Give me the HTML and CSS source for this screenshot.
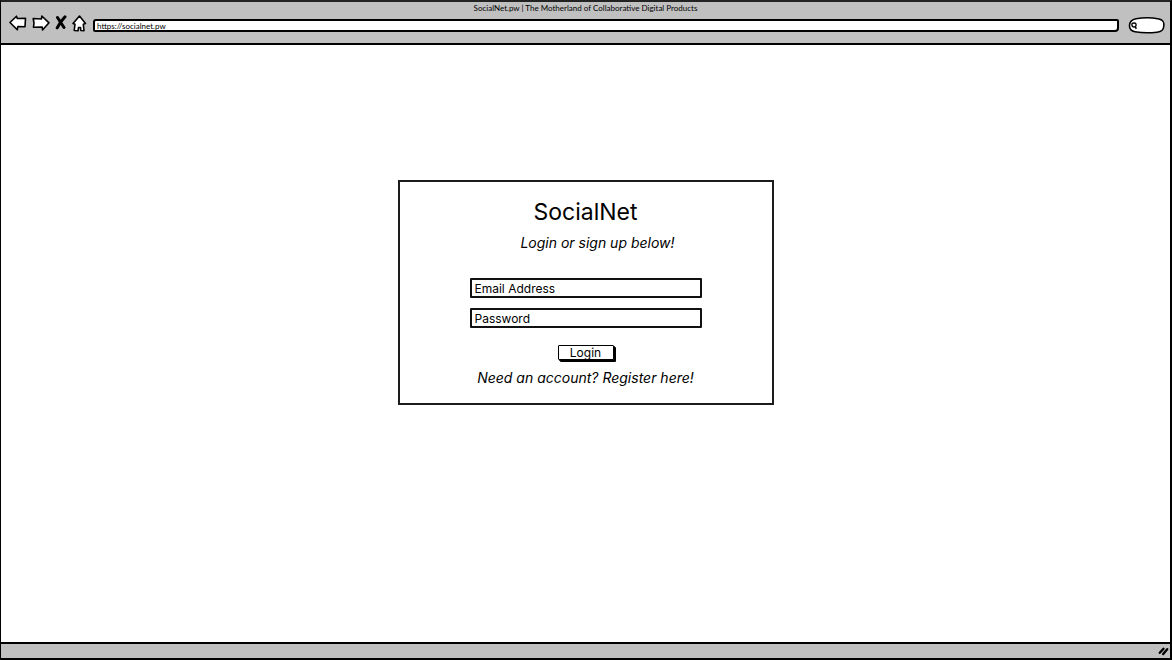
FILE: index.html
```html
<!DOCTYPE html>
<html lang="en">
<head>
<meta charset="utf-8">
<title>SocialNet.pw | The Motherland of Collaborative Digital Products</title>
<link rel="stylesheet" href="styles.css">
</head>
<body>
<div class="window">
  <header class="chrome">
    <div class="window-title">SocialNet.pw | The Motherland of Collaborative Digital Products</div>
    <div class="toolbar">
      <nav class="nav-buttons" aria-label="Browser navigation">
        <button class="nav-button" type="button" aria-label="Back"><svg width="18" height="18" viewBox="0 0 18 18"><path class="outline" d="M1 7.500 7.500 1.200 8.300 3.500 16.500 3.200 16 11.800 8.800 11.500 8.300 14.800Z"/></svg></button>
        <button class="nav-button" type="button" aria-label="Forward"><svg width="18" height="18" viewBox="0 0 18 18"><path class="outline" d="M1.200 3.500 9.500 4 9.800 1 17 7.800 10.500 15 10.200 12 1.500 12.200 2 8Z"/></svg></button>
        <button class="nav-button" type="button" aria-label="Stop"><svg width="12" height="18" viewBox="0 0 12 18"><path class="cross" d="M2.500 2.500 9 12.500M10 1.800C7 5 4 9 2.200 12.800"/></svg></button>
        <button class="nav-button" type="button" aria-label="Home"><svg width="15" height="18" viewBox="0 0 15 18"><path class="outline" d="M7.500 1 13.500 8.500 11.300 9.200 12 15.800 8.800 15.500 8.500 12.500 6.500 12.500 6 15.800 2.200 15.500 3 9.200 1 8.500Z"/></svg></button>
      </nav>
      <input class="address" type="text" aria-label="Address" value="https://socialnet.pw">
      <button class="search" type="button" aria-label="Search"><svg width="37" height="17" viewBox="0 0 37 17"><path class="outline" d="M8 1.700C15 .6 26 1 31 2 36 3 36 6 35.800 9 35.600 13 34 14.600 29 15.200 22 16 13 15.800 7 14.800-.5 13.500-.5 3.500 8 1.700Z"/><path class="lens" d="M4.200 6.500C5 5.800 7.800 5.800 8 7 8.200 9.500 7.500 10 6 10 3.800 10 3.600 7.800 4.200 6.500ZM7.400 9.500 8.200 12"/></svg></button>
    </div>
  </header>
  <main class="page">
    <form class="card">
      <h1 class="brand">SocialNet</h1>
      <p class="tagline">Login or sign up below!</p>
      <div class="fields">
        <input class="field" type="text" aria-label="Email Address" placeholder="Email Address">
        <input class="field" type="password" aria-label="Password" placeholder="Password">
      </div>
      <button class="login" type="button">Login</button>
      <a class="register" href="#">Need an account? Register here!</a>
    </form>
  </main>
  <footer class="status">
    <svg width="11" height="10" viewBox="0 0 11 10" aria-hidden="true"><path class="grip" d="M1.800 6.800 5.500 2.800M5.200 8 9.200 3.200"/></svg>
  </footer>
</div>
</body>
</html>
```
FILE: styles.css
```css
* {
  box-sizing: border-box;
}

body {
  margin: 0;
  background: #fff;
  color: #000;
  font-family: Inter, "Liberation Sans", sans-serif;
}

button,
input {
  margin: 0;
  color: inherit;
  font-family: inherit;
}

.window {
  display: flex;
  flex-direction: column;
  min-height: 100vh;
  border: 1px solid #000;
  border-top: 2px solid #222;
  border-right-width: 2px;
  border-bottom-width: 2px;
}

.chrome {
  padding-bottom: 9px;
  border-bottom: 2px solid #000;
  background: #c0c0c0;
}

.window-title,
.address {
  font-family: Lato, "Liberation Sans", sans-serif;
  font-size: 8px;
}

.window-title {
  line-height: 12px;
  text-align: center;
}

.toolbar {
  display: flex;
  align-items: center;
  gap: 9px;
  height: 20px;
  padding: 0 5px 0 8px;
}

.nav-buttons {
  display: flex;
  gap: 5px;
  margin-right: -3px;
}

.nav-button,
.search {
  display: block;
  padding: 0;
  border: 0;
  background: none;
}

.nav-button svg,
.search svg {
  display: block;
}

.outline {
  fill: #fff;
  stroke: #000;
  stroke-width: 1.6;
  stroke-linejoin: round;
}

.cross {
  fill: none;
  stroke: #000;
  stroke-width: 3;
  stroke-linecap: round;
}

.lens {
  fill: none;
  stroke: #000;
  stroke-width: 1.4;
}

.address {
  flex: 1;
  min-width: 0;
  height: 13px;
  margin-top: 3px;
  padding: 0 2px;
  border: 2px solid #000;
  border-radius: 3px 2px 4px 2px;
  background: #fff;
  line-height: 9px;
}

.search {
  margin-top: 2px;
}

.page {
  flex: 1;
  padding: 135px 16px 16px;
}

.card {
  display: flex;
  flex-direction: column;
  align-items: center;
  width: 376px;
  max-width: 100%;
  margin: 0 auto;
  padding: 16px 16px 15px;
  border: 2px solid #1c1c1c;
}

.brand {
  margin: 0;
  font-size: 23px;
  font-weight: 400;
  line-height: 28px;
}

.tagline {
  margin: 6px 0 0;
  padding-left: 24px;
  font-size: 14px;
  font-style: italic;
  line-height: 22px;
}

.fields {
  display: grid;
  gap: 10px;
  width: 232px;
  max-width: 100%;
  margin-top: 24px;
}

.field {
  width: 100%;
  height: 20px;
  padding: 0 3px;
  border: 2px solid #111;
  border-radius: 1px;
  background: #fff;
  font-size: 12px;
}

.field::placeholder {
  color: #000;
  opacity: 1;
}

.login {
  width: 56px;
  height: 15px;
  margin-top: 17px;
  padding: 0;
  border: 1px solid #000;
  border-radius: 1px;
  background: #fff;
  box-shadow: 1px 1px 0 #000, 2px 2px 0 #000;
  font-size: 12px;
  line-height: 13px;
}

.register {
  margin-top: 8px;
  color: inherit;
  font-size: 14px;
  font-style: italic;
  line-height: 20px;
  text-decoration: none;
}

.status {
  display: flex;
  align-items: center;
  justify-content: flex-end;
  height: 16px;
  padding-right: 1px;
  border-top: 2px solid #000;
  background: #c0c0c0;
}

.grip {
  fill: none;
  stroke: #000;
  stroke-width: 2.4;
  stroke-linecap: round;
}
```
